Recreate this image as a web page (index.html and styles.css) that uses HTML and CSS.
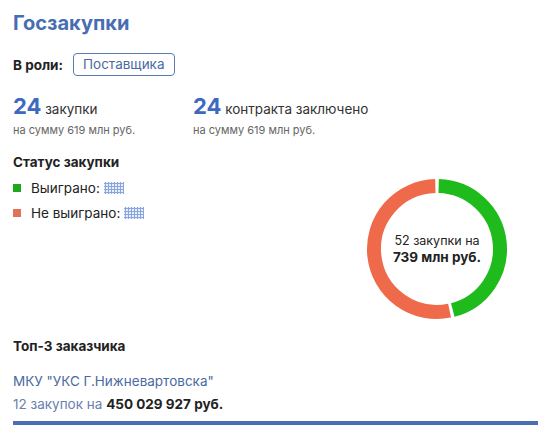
FILE: index.html
```html
<!DOCTYPE html>
<html lang="ru">
<head>
<meta charset="utf-8">
<link rel="stylesheet" href="styles.css">
</head>
<body>
<div class="card">
  <h1 class="title">Госзакупки</h1>
  <div class="role">
    <span class="role-label">В роли:</span>
    <span class="badge">Поставщика</span>
  </div>
  <div class="stats">
    <div class="stat">
      <div class="stat-main"><span class="num">24</span> закупки</div>
      <div class="stat-sub">на сумму 619 млн руб.</div>
    </div>
    <div class="stat">
      <div class="stat-main"><span class="num">24</span> контракта заключено</div>
      <div class="stat-sub">на сумму 619 млн руб.</div>
    </div>
  </div>
  <div class="status">
    <div class="legend">
      <div class="section-title">Статус закупки</div>
      <div class="legend-item"><span class="dot green"></span>Выиграно: <span class="blur"></span></div>
      <div class="legend-item"><span class="dot orange"></span>Не выиграно: <span class="blur"></span></div>
    </div>
    <div class="donut">
      <svg width="142" height="142" viewBox="0 0 142 142">
        <!-- won: clockwise from top -->
        <path d="M72.65 8.02 A63 63 0 0 1 86.77 131.99" fill="none" stroke="#1fbb1c" stroke-width="14"/>
        <!-- lost: the remaining arc -->
        <path d="M83.56 132.73 A63 63 0 1 1 69.35 8.02" fill="none" stroke="#ef6a4a" stroke-width="14"/>
      </svg>
      <div class="donut-label">
        <div>52 закупки на</div>
        <div class="donut-sum">739 млн руб.</div>
      </div>
    </div>
  </div>
  <div class="top">
    <div class="section-title">Топ-3 заказчика</div>
    <a class="customer" href="#">МКУ "УКС Г.Нижневартовска"</a>
    <div class="customer-info"><span class="muted">12 закупок на</span> <b>450 029 927 руб.</b></div>
    <div class="bar"></div>
  </div>
</div>
</body>
</html>
```

FILE: styles.css
```css
* { box-sizing: border-box; }

body {
  margin: 0;
  background: #fff;
  font-family: Inter, "Noto Sans", sans-serif;
  color: #222;
}

.card {
  width: 552px;
  height: 436px;
  padding: 10px 14px 0 13px;
  overflow: hidden;
}

.title {
  margin: 0;
  font-size: 20px;
  font-weight: 700;
  line-height: 26px;
  color: #476db3;
}

.role {
  display: flex;
  align-items: center;
  gap: 10px;
  margin-top: 17px;
}

.role-label {
  font-size: 13.5px;
  font-weight: 700;
}

.badge {
  font-size: 13.5px;
  color: #4a6aa3;
  border: 1px solid #5a7ab5;
  border-radius: 4px;
  padding: 3px 9px;
  line-height: 15px;
}

.stats {
  display: flex;
  margin-top: 18px;
}

.stat { width: 180px; }

.stat-main {
  font-size: 13.5px;
  color: #333;
  line-height: 24px;
}

.num {
  font-size: 22px;
  font-weight: 700;
  color: #3d6ac0;
}

.stat-sub {
  font-size: 11px;
  color: #666;
  margin-top: 2px;
}

.status {
  display: flex;
  justify-content: space-between;
  margin-top: 16px;
}

.section-title {
  font-size: 13.5px;
  font-weight: 700;
  line-height: 18px;
}

.legend-item {
  display: flex;
  align-items: center;
  font-size: 13.5px;
  line-height: 16px;
  margin-top: 9px;
}

.dot {
  width: 8px;
  height: 8px;
  margin-right: 10px;
}

.dot.green { background: #1ea81e; }
.dot.orange { background: #e2715a; }

.blur {
  display: inline-block;
  width: 20px;
  height: 12px;
  margin-left: 4px;
  background-image: radial-gradient(circle, #8aa6e0 1px, transparent 1.3px);
  background-size: 3px 3px;
  background-color: #e8eefa;
}

.donut {
  position: relative;
  width: 142px;
  height: 142px;
  margin: 25px 30px 0 0;
}

.donut svg { display: block; }

.donut-label {
  position: absolute;
  inset: 0;
  display: flex;
  flex-direction: column;
  align-items: center;
  justify-content: center;
  font-size: 12.5px;
  line-height: 17px;
  color: #222;
}

.donut-sum {
  font-size: 13.5px;
  font-weight: 700;
}

.top { margin-top: 17px; }

.customer {
  display: block;
  margin-top: 18px;
  font-size: 13.5px;
  color: #4a6aa3;
  text-decoration: none;
  line-height: 16px;
}

.customer-info {
  margin-top: 7px;
  font-size: 13.5px;
  line-height: 16px;
}

.muted { color: #6a80ad; }

.bar {
  height: 4px;
  background: #4a6eb3;
  margin-top: 9px;
  width: 525px;
}
```
